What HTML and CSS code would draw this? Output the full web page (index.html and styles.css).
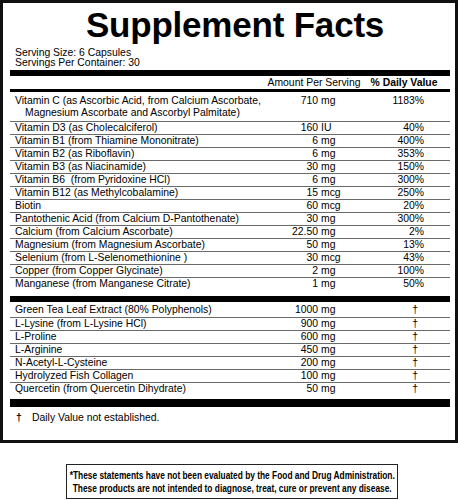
FILE: index.html
```html
<!DOCTYPE html>
<html lang="en">
<head>
<meta charset="utf-8">
<title>Supplement Facts</title>
<link rel="stylesheet" href="styles.css">
</head>
<body>
<div class="label">
  <h1 class="title">Supplement Facts</h1>
  <div class="serving">Serving Size: 6 Capsules<br>Servings Per Container: 30</div>
  <div class="bar bar-thick"></div>
  <div class="head"><span class="head-amt">Amount Per Serving</span><span class="head-dv">% Daily Value</span></div>
  <div class="bar bar-thin"></div>
  <div class="rows">
    <div class="row row-first"><div class="name">Vitamin C (as Ascorbic Acid, from Calcium Ascorbate,<span class="cont">Magnesium Ascorbate and Ascorbyl Palmitate)</span></div><span class="num">710</span><span class="unit">mg</span><span class="dv">1183%</span></div>
    <div class="row"><div class="name">Vitamin D3 (as Cholecalciferol)</div><span class="num">160</span><span class="unit">IU</span><span class="dv">40%</span></div>
    <div class="row"><div class="name">Vitamin B1 (from Thiamine Mononitrate)</div><span class="num">6</span><span class="unit">mg</span><span class="dv">400%</span></div>
    <div class="row"><div class="name">Vitamin B2 (as Riboflavin)</div><span class="num">6</span><span class="unit">mg</span><span class="dv">353%</span></div>
    <div class="row"><div class="name">Vitamin B3 (as Niacinamide)</div><span class="num">30</span><span class="unit">mg</span><span class="dv">150%</span></div>
    <div class="row"><div class="name">Vitamin B6&nbsp; (from Pyridoxine HCl)</div><span class="num">6</span><span class="unit">mg</span><span class="dv">300%</span></div>
    <div class="row"><div class="name">Vitamin B12 (as Methylcobalamine)</div><span class="num">15</span><span class="unit">mcg</span><span class="dv">250%</span></div>
    <div class="row"><div class="name">Biotin</div><span class="num">60</span><span class="unit">mcg</span><span class="dv">20%</span></div>
    <div class="row"><div class="name">Pantothenic Acid (from Calcium D-Pantothenate)</div><span class="num">30</span><span class="unit">mg</span><span class="dv">300%</span></div>
    <div class="row"><div class="name">Calcium (from Calcium Ascorbate)</div><span class="num">22.50</span><span class="unit">mg</span><span class="dv">2%</span></div>
    <div class="row"><div class="name">Magnesium (from Magnesium Ascorbate)</div><span class="num">50</span><span class="unit">mg</span><span class="dv">13%</span></div>
    <div class="row"><div class="name">Selenium (from L-Selenomethionine )</div><span class="num">30</span><span class="unit">mcg</span><span class="dv">43%</span></div>
    <div class="row"><div class="name">Copper (from Copper Glycinate)</div><span class="num">2</span><span class="unit">mg</span><span class="dv">100%</span></div>
    <div class="row"><div class="name">Manganese (from Manganese Citrate)</div><span class="num">1</span><span class="unit">mg</span><span class="dv">50%</span></div>
  </div>
  <div class="bar bar-thick bar-mid"></div>
  <div class="rows rows-lower">
    <div class="row"><div class="name">Green Tea Leaf Extract (80% Polyphenols)</div><span class="num">1000</span><span class="unit">mg</span><span class="dv dagger">†</span></div>
    <div class="row"><div class="name">L-Lysine (from L-Lysine HCl)</div><span class="num">900</span><span class="unit">mg</span><span class="dv dagger">†</span></div>
    <div class="row"><div class="name">L-Proline</div><span class="num">600</span><span class="unit">mg</span><span class="dv dagger">†</span></div>
    <div class="row"><div class="name">L-Arginine</div><span class="num">450</span><span class="unit">mg</span><span class="dv dagger">†</span></div>
    <div class="row"><div class="name">N-Acetyl-L-Cysteine</div><span class="num">200</span><span class="unit">mg</span><span class="dv dagger">†</span></div>
    <div class="row"><div class="name">Hydrolyzed Fish Collagen</div><span class="num">100</span><span class="unit">mg</span><span class="dv dagger">†</span></div>
    <div class="row"><div class="name">Quercetin (from Quercetin Dihydrate)</div><span class="num">50</span><span class="unit">mg</span><span class="dv dagger">†</span></div>
  </div>
  <div class="bar bar-heavy"></div>
  <div class="footnote"><span class="foot-mark">†</span><span>Daily Value not established.</span></div>
</div>
<div class="disclaimer">
  <p class="disc-text">*These statements have not been evaluated by the Food and Drug Administration.<br>These products are not intended to diagnose, treat, cure or prevent any disease.</p>
</div>
</body>
</html>
```

FILE: styles.css
```css
html, body {
  margin: 0;
  padding: 0;
  background: #fff;
}

body {
  font-family: "Liberation Sans", Arial, sans-serif;
  color: #000;
  width: 458px;
}

.label {
  box-sizing: border-box;
  width: 458px;
  border: 3px solid #111;
  padding: 2px 5px 0 7px;
  font-size: 10.4px;
}

.title {
  margin: 0;
  padding-left: 10px;
  font-size: 35px;
  line-height: 40px;
  font-weight: bold;
  text-align: center;
  letter-spacing: -0.2px;
}

.serving {
  margin-top: 3px;
  padding-left: 5px;
  line-height: 10px;
}

.bar {
  background: #000;
}

.bar-thick {
  height: 6px;
  margin-top: 2px;
}

.bar-mid {
  margin-top: 6px;
}

.bar-thin {
  height: 3px;
}

.bar-heavy {
  height: 8px;
  margin-top: 4px;
}

.head {
  display: grid;
  grid-template-columns: 1fr 100px 80px;
  padding: 1px 6px 0 0;
  line-height: 12px;
}

.head-amt {
  grid-column: 2;
  text-align: center;
}

.head-dv {
  grid-column: 3;
  text-align: center;
  font-weight: bold;
}

.row {
  display: grid;
  grid-template-columns: 1fr 48px 34px 72px;
  padding-right: 26px;
  line-height: 12px;
  border-bottom: 1px solid #6a6a6a;
  white-space: nowrap;
}

.row:last-child {
  border-bottom: none;
}

.row-first {
  padding-top: 3px;
  padding-bottom: 2px;
}

.rows-lower .row:first-child {
  padding-top: 2px;
  padding-bottom: 1px;
}

.name {
  padding-left: 5px;
}

.cont {
  display: block;
  padding-left: 10px;
}

.num {
  text-align: right;
}

.unit {
  padding-left: 3px;
}

.dv {
  text-align: right;
}

.dagger {
  padding-right: 6px;
}

.footnote {
  display: flex;
  margin-top: 5px;
  padding: 0 0 16px 6px;
  line-height: 12px;
}

.foot-mark {
  width: 16px;
  font-weight: bold;
}

.disclaimer {
  box-sizing: border-box;
  width: 332px;
  height: 35px;
  margin: 21px 0 0 66px;
  border: 1px solid #222;
  display: flex;
  justify-content: center;
  align-items: center;
}

.disc-text {
  flex: none;
  margin: 0;
  font-family: "Liberation Sans", Arial, sans-serif;
  font-weight: bold;
  font-size: 10.2px;
  line-height: 13px;
  text-align: center;
  white-space: nowrap;
  transform: scaleX(0.82);
  transform-origin: center;
}
```
